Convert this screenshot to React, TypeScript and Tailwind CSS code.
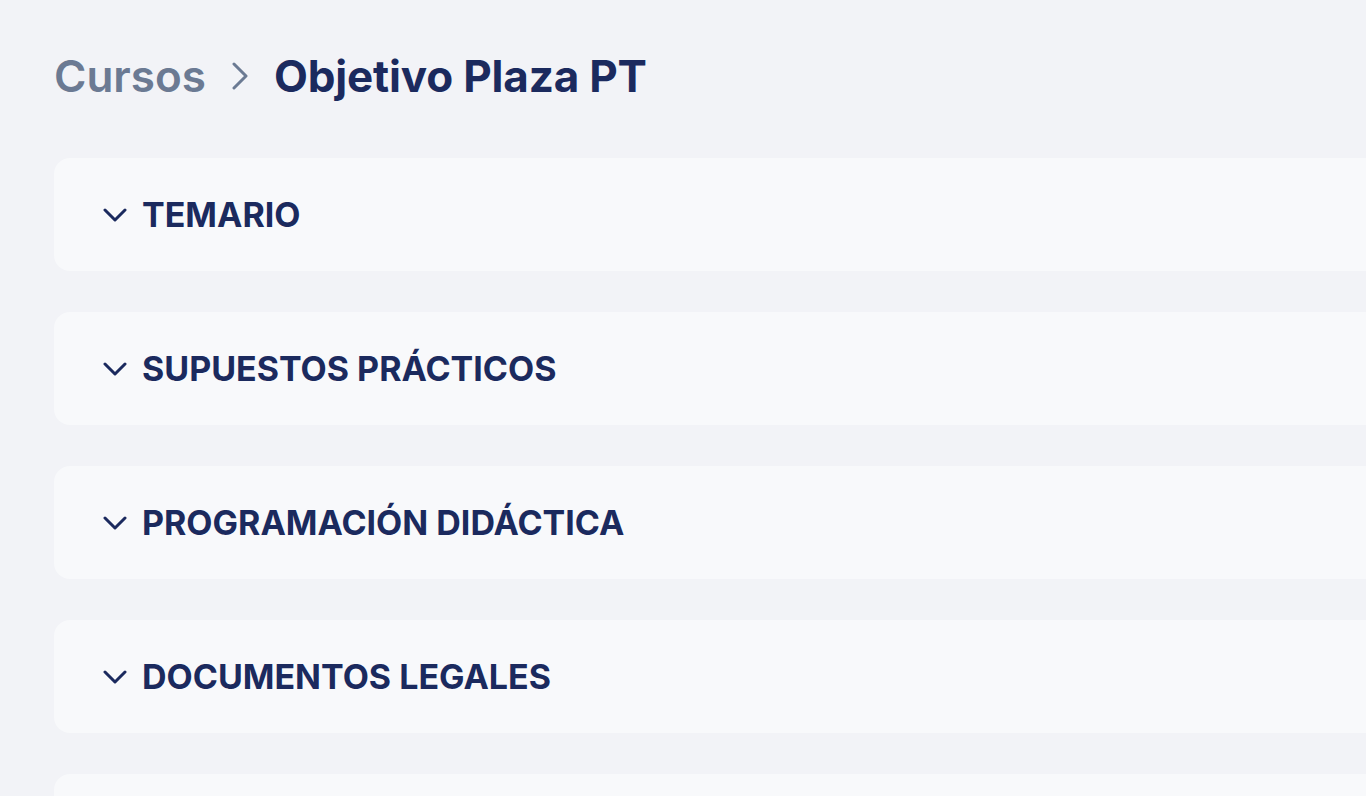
const SECTIONS = ['TEMARIO', 'SUPUESTOS PRÁCTICOS', 'PROGRAMACIÓN DIDÁCTICA', 'DOCUMENTOS LEGALES'];

function ChevronDown() {
  return (
    <svg width="24" height="14" viewBox="0 0 24 14" fill="none" className="shrink-0">
      <path d="M2 2l10 10L22 2" stroke="#1b2a5e" strokeWidth="3" strokeLinecap="round" strokeLinejoin="round" />
    </svg>
  );
}

function ChevronRight() {
  return (
    <svg width="18" height="28" viewBox="0 0 18 28" fill="none" className="shrink-0">
      <path d="M3 2l12 12L3 26" stroke="#6b7a93" strokeWidth="3" strokeLinecap="round" strokeLinejoin="round" />
    </svg>
  );
}

export default function App() {
  return (
    <div
      className="h-screen overflow-hidden bg-[#f2f3f7] pl-[54px] pt-[50px]"
      style={{ fontFamily: 'Inter, "Noto Sans", sans-serif' }}
    >
      <nav className="flex h-[52px] items-center gap-[25px]">
        <span className="text-[44px] font-semibold text-[#6b7a93]">Cursos</span>
        <ChevronRight />
        <h1 className="text-[44px] font-bold tracking-[-0.004em] text-[#1b2a5e]">Objetivo Plaza PT</h1>
      </nav>
      <div className="mr-[-60px] mt-[56px] flex flex-col gap-[41px]">
        {SECTIONS.map((s) => (
          <div key={s} className="flex h-[113px] items-center gap-[15px] rounded-[16px] bg-[#f8f9fb] pl-[49px]">
            <ChevronDown />
            <span className="text-[34px] font-bold text-[#1b2a5e]">{s}</span>
          </div>
        ))}
        {/* siguiente sección, fuera de la vista */}
        <div className="h-[113px] rounded-[16px] bg-[#f8f9fb]" />
      </div>
    </div>
  );
}
